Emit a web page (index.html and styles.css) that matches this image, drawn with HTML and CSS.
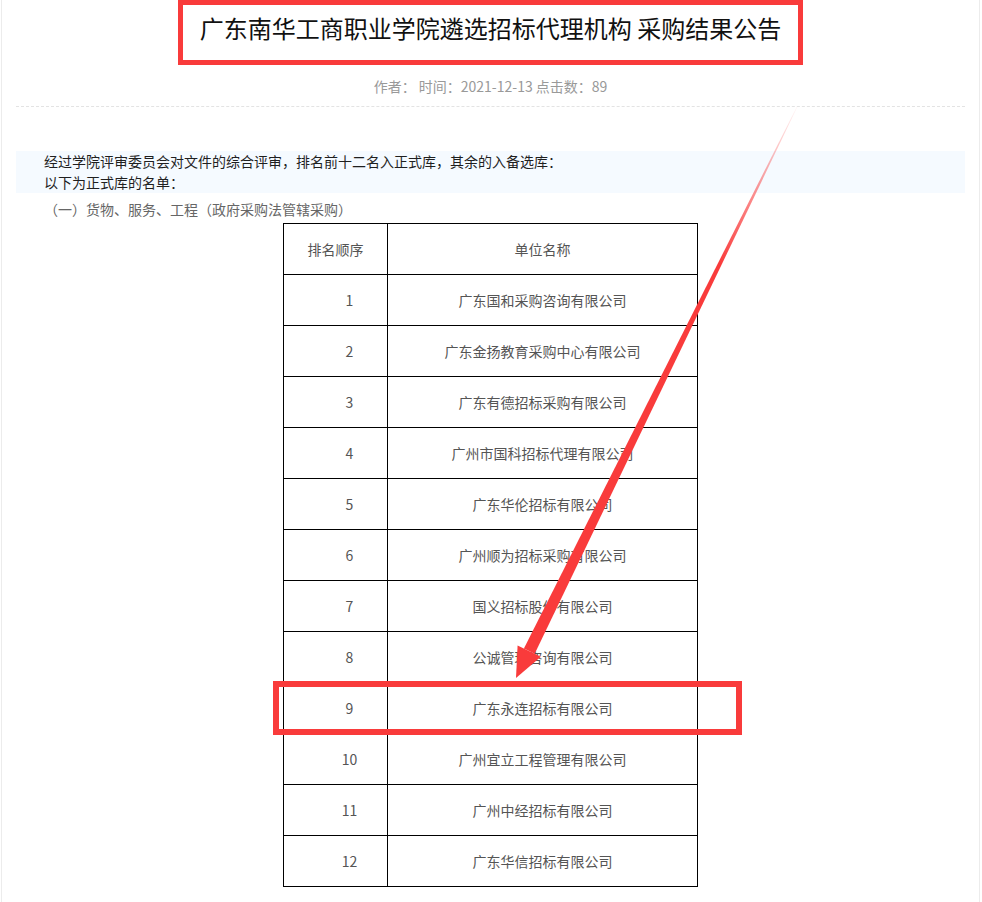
FILE: index.html
```html
<!DOCTYPE html>
<html lang="zh-CN">
<head>
<meta charset="utf-8">
<title>广东南华工商职业学院遴选招标代理机构 采购结果公告</title>
<link rel="stylesheet" href="styles.css">
</head>
<body>
<div class="page">
  <div class="header">
    <h1 class="title">广东南华工商职业学院遴选招标代理机构 采购结果公告</h1>
    <div class="meta">作者： 时间：2021-12-13 点击数：89</div>
  </div>
  <div class="content">
    <div class="intro">
      <p>经过学院评审委员会对文件的综合评审，排名前十二名入正式库，其余的入备选库：</p>
      <p>以下为正式库的名单：</p>
    </div>
    <p class="section">（一）货物、服务、工程（政府采购法管辖采购）</p>
    <table class="list">
      <thead>
        <tr><th class="rank">排名顺序</th><th class="name">单位名称</th></tr>
      </thead>
      <tbody>
        <tr><td class="num">1</td><td>广东国和采购咨询有限公司</td></tr>
        <tr><td class="num">2</td><td>广东金扬教育采购中心有限公司</td></tr>
        <tr><td class="num">3</td><td>广东有德招标采购有限公司</td></tr>
        <tr><td class="num">4</td><td>广州市国科招标代理有限公司</td></tr>
        <tr><td class="num">5</td><td>广东华伦招标有限公司</td></tr>
        <tr><td class="num">6</td><td>广州顺为招标采购有限公司</td></tr>
        <tr><td class="num">7</td><td>国义招标股份有限公司</td></tr>
        <tr><td class="num">8</td><td>公诚管理咨询有限公司</td></tr>
        <tr><td class="num">9</td><td>广东永连招标有限公司</td></tr>
        <tr><td class="num">10</td><td>广州宜立工程管理有限公司</td></tr>
        <tr><td class="num">11</td><td>广州中经招标有限公司</td></tr>
        <tr><td class="num">12</td><td>广东华信招标有限公司</td></tr>
      </tbody>
    </table>
  </div>
</div>
<svg class="annot" width="982" height="902" viewBox="0 0 982 902" xmlns="http://www.w3.org/2000/svg">
  <defs>
    <linearGradient id="fade" gradientUnits="userSpaceOnUse" x1="797" y1="107" x2="720" y2="265">
      <stop offset="0" stop-color="#f93b3b" stop-opacity="0.05"/>
      <stop offset="1" stop-color="#f93b3b" stop-opacity="1"/>
    </linearGradient>
  </defs>
  <rect x="276" y="684" width="463" height="48" fill="none" stroke="#f93b3b" stroke-width="6"/>
  <polygon points="797.3,107.1 796.7,106.9 523.9,648.4 534.7,653.8" fill="url(#fade)"/>
  <polygon points="517.6,645.4 540.9,656.8 516,678" fill="#f93b3b"/>
</svg>
</body>
</html>
```
FILE: styles.css
```css
html, body {
  margin: 0;
  padding: 0;
  background: #fff;
}
body {
  font-family: "Noto Sans CJK SC", "Microsoft YaHei", "Noto Sans", sans-serif;
  font-size: 14px;
  color: #333;
  position: relative;
  width: 982px;
  min-height: 902px;
  overflow: hidden;
}
.page {
  margin-left: 1px;
  width: 979px;
  box-sizing: border-box;
  border-left: 1px solid #ececec;
  border-right: 1px solid #ececec;
  padding: 0 14px 40px;
  min-height: 960px;
}
.header {
  text-align: center;
  border-bottom: 1px dashed #e3e3e3;
  padding-bottom: 10px;
}
.title {
  display: inline-block;
  margin: 0;
  border: 5px solid #f93b3b;
  padding: 5px 17px 14px;
  font-size: 24px;
  line-height: 36px;
  font-weight: normal;
  color: #111;
}
.meta {
  margin-top: 11px;
  line-height: 20px;
  font-size: 14px;
  color: #999;
}
.content {
  padding-top: 44px;
}
.intro {
  background: #f5faff;
  padding: 0 28px;
}
.intro p {
  margin: 0;
  line-height: 21px;
  color: #1f1f1f;
}
.section {
  margin: 4px 0 2px;
  padding-left: 28px;
  line-height: 24px;
  color: #666;
}
.list {
  margin: 0 auto;
  border-collapse: collapse;
  width: 415px;
  color: #555;
  font-size: 14px;
}
.list th, .list td {
  border: 1px solid #000;
  height: 51px;
  padding: 0;
  text-align: center;
  font-weight: normal;
  box-sizing: border-box;
}
.list .rank {
  width: 104px;
}
.list .num {
  padding-left: 28px;
}
.annot {
  position: absolute;
  left: 0;
  top: 0;
  pointer-events: none;
}
```
